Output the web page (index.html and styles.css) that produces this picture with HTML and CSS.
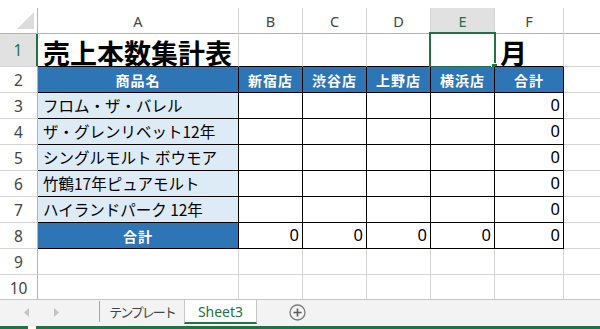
FILE: index.html
```html
<!DOCTYPE html>
<html lang="ja">
<head>
    <meta charset="UTF-8">
    <title>売上本数集計表</title>
    <link rel="stylesheet" href="styles.css">
</head>
<body>

<div class="app">
    <div class="sheet">
        <!-- column headers -->
        <div class="c corner"><span class="tri"></span></div>
        <div class="c ch">A</div>
        <div class="c ch">B</div>
        <div class="c ch">C</div>
        <div class="c ch">D</div>
        <div class="c ch sel">E</div>
        <div class="c ch">F</div>
        <div class="c ch"></div>

        <!-- row 1 -->
        <div class="c rh sel">1</div>
        <div class="c edge title">売上本数集計表</div>
        <div class="c edge"></div>
        <div class="c edge"></div>
        <div class="c edge"></div>
        <div class="c edge"><div class="sel-box"><span class="handle"></span></div></div>
        <div class="c edge title">月</div>
        <div class="c"></div>

        <!-- row 2 -->
        <div class="c rh">2</div>
        <div class="c hd">商品名</div>
        <div class="c hd">新宿店</div>
        <div class="c hd">渋谷店</div>
        <div class="c hd">上野店</div>
        <div class="c hd">横浜店</div>
        <div class="c hd">合計</div>
        <div class="c"></div>

        <div class="c rh">3</div>
        <div class="c nm">フロム・ザ・バレル</div>
        <div class="c tb"></div><div class="c tb"></div><div class="c tb"></div><div class="c tb"></div>
        <div class="c tb n">0</div>
        <div class="c"></div>

        <div class="c rh">4</div>
        <div class="c nm">ザ・グレンリベット12年</div>
        <div class="c tb"></div><div class="c tb"></div><div class="c tb"></div><div class="c tb"></div>
        <div class="c tb n">0</div>
        <div class="c"></div>

        <div class="c rh">5</div>
        <div class="c nm">シングルモルト ボウモア</div>
        <div class="c tb"></div><div class="c tb"></div><div class="c tb"></div><div class="c tb"></div>
        <div class="c tb n">0</div>
        <div class="c"></div>

        <div class="c rh">6</div>
        <div class="c nm">竹鶴17年ピュアモルト</div>
        <div class="c tb"></div><div class="c tb"></div><div class="c tb"></div><div class="c tb"></div>
        <div class="c tb n">0</div>
        <div class="c"></div>

        <div class="c rh">7</div>
        <div class="c nm">ハイランドパーク 12年</div>
        <div class="c tb"></div><div class="c tb"></div><div class="c tb"></div><div class="c tb"></div>
        <div class="c tb n">0</div>
        <div class="c"></div>

        <!-- totals -->
        <div class="c rh">8</div>
        <div class="c hd">合計</div>
        <div class="c tb n">0</div>
        <div class="c tb n">0</div>
        <div class="c tb n">0</div>
        <div class="c tb n">0</div>
        <div class="c tb n">0</div>
        <div class="c"></div>

        <div class="c rh">9</div>
        <div class="c"></div><div class="c"></div><div class="c"></div><div class="c"></div><div class="c"></div><div class="c"></div><div class="c"></div>

        <div class="c rh">10</div>
        <div class="c"></div><div class="c"></div><div class="c"></div><div class="c"></div><div class="c"></div><div class="c"></div><div class="c"></div>
    </div>

    <div class="tabs">
        <div class="nav">
            <svg width="6" height="9" viewBox="0 0 6 9"><path d="M5 0 L0 4.5 L5 9 Z" fill="#c4c4c4"/></svg>
            <svg width="6" height="9" viewBox="0 0 6 9"><path d="M1 0 L6 4.5 L1 9 Z" fill="#c4c4c4"/></svg>
        </div>
        <div class="tab first">テンプレート</div>
        <div class="tab active">Sheet3</div>
        <svg class="add" width="17" height="17" viewBox="0 0 17 17">
            <circle cx="8.5" cy="8.5" r="7.5" fill="none" stroke="#7a7a7a" stroke-width="1.3"/>
            <path d="M8.5 4.5 V12.5 M4.5 8.5 H12.5" stroke="#5a5a5a" stroke-width="1.6"/>
        </svg>
    </div>

    <div class="status"><span class="gap"></span></div>
</div>

</body>
</html>
```

FILE: styles.css
```css
body {
    margin: 0;
    font-family: "Noto Sans", "Noto Sans CJK JP", sans-serif;
    background: #fff;
    width: 600px;
    height: 329px;
    overflow: hidden;
}
.app {
    display: flex;
    flex-direction: column;
    height: 329px;
}
.sheet {
    margin-top: 8px;
    height: 291px;
    overflow: hidden;
    display: grid;
    grid-template-columns: 38px 201px 64px 64px 64px 64px 69px 100px;
    grid-template-rows: 26px 33px repeat(9, 26px);
}
.c {
    box-sizing: border-box;
    border-right: 1px solid #d4d4d4;
    border-bottom: 1px solid #d4d4d4;
    display: flex;
    align-items: center;
    position: relative;
    white-space: nowrap;
}
.corner {
    border-right-color: #b4b4b4;
    border-bottom-color: #b4b4b4;
}
.tri {
    position: absolute;
    right: 3px;
    bottom: 4px;
    width: 17px;
    height: 17px;
    background: #dcdcdc;
    clip-path: polygon(100% 0, 100% 100%, 0 100%);
}
.ch {
    justify-content: center;
    font-size: 14.5px;
    color: #444;
    border-bottom-color: #b4b4b4;
}
.rh {
    justify-content: center;
    font-size: 15.5px;
    color: #444;
    border-right-color: #b4b4b4;
}
.ch.sel, .rh.sel {
    background: #e1e1e1;
    color: #217346;
}
.rh.sel {
    border-right: 2px solid #217346;
}
.edge {
    border-bottom-color: #000;
}
.title {
    font-family: "Noto Sans CJK JP", sans-serif;
    font-weight: 700;
    font-size: 27px;
    line-height: 27px;
    align-items: flex-end;
    padding-left: 5px;
}
.hd {
    background: #2e75b6;
    color: #fff;
    font-family: "Noto Sans CJK JP", sans-serif;
    font-weight: 700;
    font-size: 14px;
    letter-spacing: 1px;
    justify-content: center;
    border-color: #000;
}
.nm {
    background: #ddebf7;
    font-family: "Noto Sans CJK JP", sans-serif;
    font-size: 15.5px;
    padding-left: 5px;
    padding-bottom: 2px;
    border-color: #000;
}
.tb {
    border-color: #000;
}
.n {
    justify-content: flex-end;
    padding-right: 3px;
    padding-bottom: 2px;
    font-size: 16.5px;
}
.sel-box {
    position: absolute;
    left: -2px;
    top: -2px;
    width: 67px;
    height: 36px;
    box-sizing: border-box;
    border: 2px solid #217346;
}
.handle {
    position: absolute;
    left: 60px;
    top: 29px;
    width: 5px;
    height: 5px;
    background: #217346;
    border: 1px solid #fff;
}
.tabs {
    height: 27px;
    box-sizing: border-box;
    border-top: 1px solid #c6c6c6;
    background: #f3f3f3;
    display: flex;
    align-items: flex-start;
}
.nav {
    width: 99px;
    height: 25px;
    display: flex;
    align-items: center;
    padding-left: 24px;
    gap: 23px;
    box-sizing: border-box;
}
.tab {
    display: flex;
    align-items: center;
    justify-content: center;
    box-sizing: border-box;
    color: #444;
}
.tab.first {
    width: 85px;
    height: 21px;
    margin-top: 1px;
    border-left: 1px solid #a6a6a6;
    font-family: "Noto Sans CJK JP", sans-serif;
    font-size: 13px;
    letter-spacing: -2px;
}
.tab.active {
    width: 73px;
    height: 24px;
    background: #fff;
    border-left: 1px solid #c6c6c6;
    border-right: 1px solid #c6c6c6;
    border-bottom: 2px solid #217346;
    color: #217346;
    font-size: 14px;
}
.add {
    margin-left: 32px;
    margin-top: 4px;
}
.status {
    height: 3px;
    background: #217346;
    display: flex;
}
.gap {
    margin-left: 28px;
    width: 8px;
    background: #fff;
}
```
